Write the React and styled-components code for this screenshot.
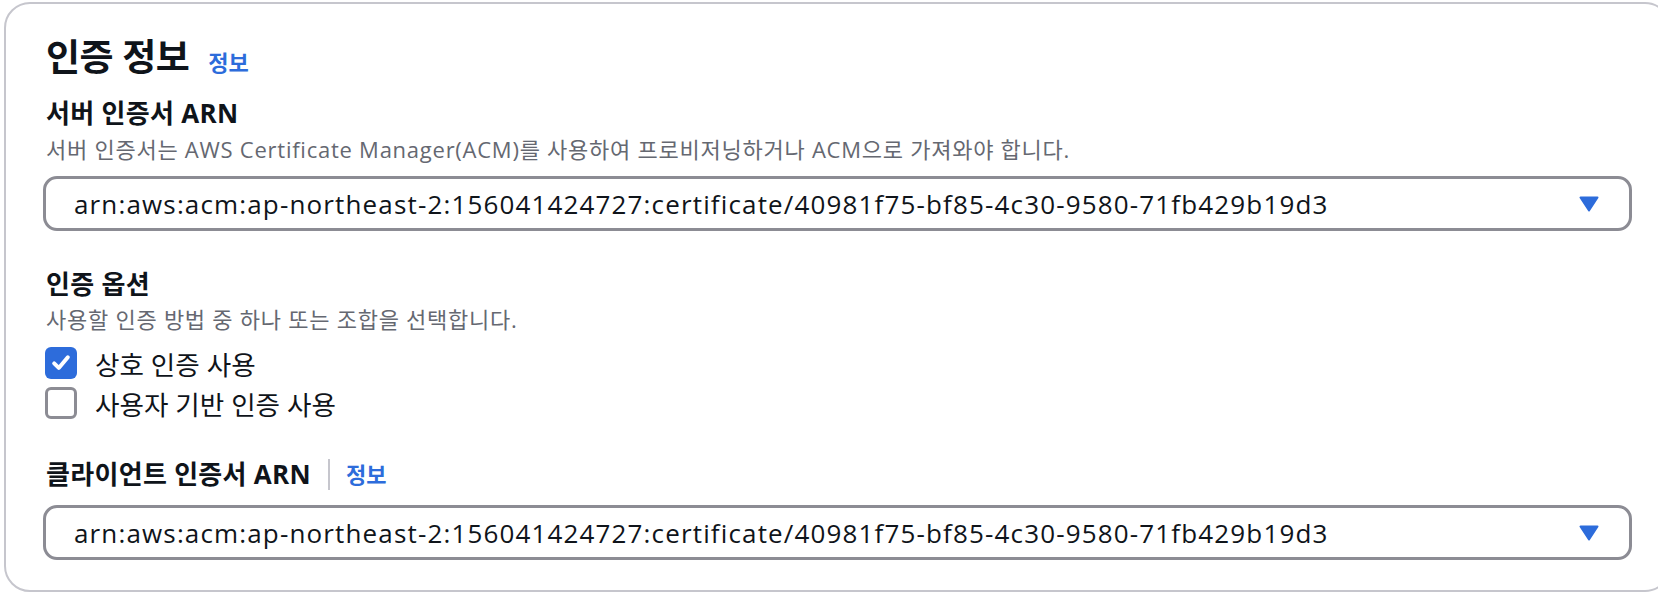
import React from "react";
import styled, { createGlobalStyle } from "styled-components";

const Global = createGlobalStyle`
  html, body { margin: 0; padding: 0; background: #ffffff; overflow: hidden; }
  body { font-family: "Open Sans", "Noto Sans CJK KR", sans-serif; color: #0f141a; }
  * { box-sizing: border-box; }
`;

const Panel = styled.section`
  margin: 2px 0 0 4px;
  width: 1667px;
  border: 2px solid #c6c6cd;
  border-radius: 26px;
  padding: 32px 37px 30px 37px;
  display: flex;
  flex-direction: column;
`;

const Header = styled.div`
  display: flex;
  align-items: baseline;
  gap: 19px;
  height: 42px;
  padding-left: 3px;
`;

const Title = styled.h2`
  margin: 0;
  font-size: 37px;
  line-height: 42px;
  font-weight: 700;
  letter-spacing: -0.5px;
  color: #0f141a;
`;

const InfoLink = styled.a`
  font-size: 22px;
  font-weight: 700;
  color: #2d6cdb;
  text-decoration: none;
  line-height: 26px;
`;

const Field = styled.div`
  display: flex;
  flex-direction: column;
  padding-left: 3px;
  margin-top: ${(p) => p.$mt}px;
`;

const LabelRow = styled.div`
  display: flex;
  align-items: center;
  height: 36px;
`;

const Label = styled.span`
  font-size: 26px;
  line-height: 36px;
  font-weight: 700;
  letter-spacing: 0.3px;
  color: #0f141a;
`;

const Separator = styled.span`
  width: 2px;
  height: 31px;
  background: #c6c6cd;
  margin: 0 16px 0 17px;
`;

const Description = styled.div`
  font-size: 22px;
  line-height: 28px;
  letter-spacing: 0.75px;
  color: #656871;
  margin-top: ${(p) => p.$mt || 0}px;
`;

const Select = styled.div`
  margin-top: ${(p) => p.$mt}px;
  height: 55px;
  width: 1589px;
  border: 3px solid #8c8c94;
  border-radius: 14px;
  display: flex;
  align-items: center;
  justify-content: space-between;
  padding: 0 30px 0 28px;
  font-size: 26px;
  letter-spacing: 1.15px;
  color: #0f141a;
`;

const SelectText = styled.span`
  white-space: nowrap;
`;

const Caret = styled.svg`
  width: 20px;
  height: 16px;
  flex: none;
`;

const CheckList = styled.div`
  display: flex;
  flex-direction: column;
  margin-top: 10px;
`;

const CheckRow = styled.label`
  display: flex;
  align-items: center;
  height: 40px;
  gap: 18px;
  padding-left: 2px;
  font-size: 26.6px;
  color: #0f141a;
`;

const Box = styled.span`
  width: 32px;
  height: 32px;
  border-radius: 6px;
  flex: none;
  display: flex;
  align-items: center;
  justify-content: center;
  background: ${(p) => (p.$checked ? "#2d6cdb" : "#ffffff")};
  border: ${(p) => (p.$checked ? "none" : "3px solid #8c8c94")};
`;

const CaretIcon = () => (
  <Caret viewBox="0 0 20 16">
    <path d="M1.5 1.5 H18.5 L10 14.5 Z" fill="#2d6cdb" stroke="#2d6cdb" strokeWidth="2" strokeLinejoin="round" />
  </Caret>
);

const Check = ({ checked, children }) => (
  <CheckRow>
    <Box $checked={checked}>
      {checked && (
        <svg width="22" height="22" viewBox="0 0 20 20">
          <path d="M3.8 10.3 L8 14.5 L16.2 4.8" fill="none" stroke="#ffffff" strokeWidth="3.6" strokeLinecap="round" strokeLinejoin="round" />
        </svg>
      )}
    </Box>
    <span>{children}</span>
  </CheckRow>
);

const ARN = "arn:aws:acm:ap-northeast-2:156041424727:certificate/40981f75-bf85-4c30-9580-71fb429b19d3";

export default function App() {
  return (
    <>
      <Global />
      <Panel>
        <Header>
          <Title>인증 정보</Title>
          <InfoLink href="#">정보</InfoLink>
        </Header>

        <Field $mt={17}>
          <LabelRow>
            <Label>서버 인증서 ARN</Label>
          </LabelRow>
          <Description $mt={4}>
            서버 인증서는 AWS Certificate Manager(ACM)를 사용하여 프로비저닝하거나 ACM으로 가져와야 합니다.
          </Description>
        </Field>
        <Select $mt={13}>
          <SelectText>{ARN}</SelectText>
          <CaretIcon />
        </Select>

        <Field $mt={35}>
          <LabelRow>
            <Label>인증 옵션</Label>
          </LabelRow>
          <Description $mt={3}>사용할 인증 방법 중 하나 또는 조합을 선택합니다.</Description>
        </Field>
        <CheckList>
          <Check checked>상호 인증 사용</Check>
          <Check>사용자 기반 인증 사용</Check>
        </CheckList>

        <Field $mt={33}>
          <LabelRow>
            <Label>클라이언트 인증서 ARN</Label>
            <Separator />
            <InfoLink href="#">정보</InfoLink>
          </LabelRow>
        </Field>
        <Select $mt={13}>
          <SelectText>{ARN}</SelectText>
          <CaretIcon />
        </Select>
      </Panel>
    </>
  );
}
